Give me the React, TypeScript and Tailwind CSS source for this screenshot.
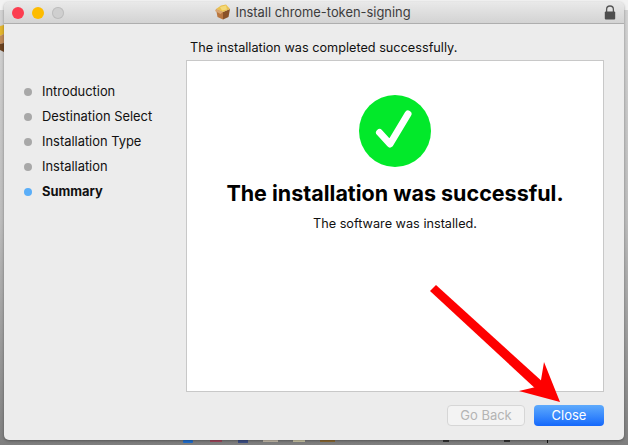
const sans = "font-['Inter','Liberation_Sans',sans-serif]";

function PackageIcon() {
  return (
    <svg width="16" height="16" viewBox="0 0 16 16" className="shrink-0">
      <path d="M1 5 L8 8 L8 15.5 L2.5 13 Z" fill="#b9763f" />
      <path d="M15 5 L8 8 L8 15.5 L13.5 13 Z" fill="#8a5228" />
      <path d="M1 5 L6 1.5 L11 .5 L15 5 L8 8 Z" fill="#e9c04f" />
      <path d="M5 3 L11 1.5 L12 5.5 L7 6.5 Z" fill="#f4d978" />
      <path d="M1 5 L8 8 L5.5 10 L0 7 Z" fill="#d9a671" />
    </svg>
  );
}

function LockIcon() {
  return (
    <svg width="12" height="15" viewBox="0 0 12 15" className="shrink-0">
      <path d="M2.6 7V4.4a3.4 3.4 0 0 1 6.8 0V7" fill="none" stroke="#555" strokeWidth="1.3" />
      <rect x="0.8" y="6.6" width="10.4" height="7.8" rx="1" fill="#4d4d4d" />
    </svg>
  );
}

function Step({ label, active }: { label: string; active?: boolean }) {
  return (
    <li className="flex h-[25px] items-center">
      <span className={`mr-[10px] h-2 w-2 rounded-full ${active ? "bg-[#5aaef8]" : "bg-[#a8a8a8]"}`} />
      <span className={`text-[12.9px] text-[#111] ${active ? "font-bold" : ""}`}>{label}</span>
    </li>
  );
}

function Desktop() {
  return (
    <svg className="pointer-events-none absolute inset-0" width="628" height="445" viewBox="0 0 628 445">
      <rect x="0" y="0" width="628" height="10" fill="#f2f2f2" />
      <path d="M0 26 L4 25 L4 34 L0 36 Z" fill="#e2b52e" />
      <path d="M0 36 L4 34 L4 43 L0 44 Z" fill="#c08a58" />
      <path d="M0 44 L4 43 L4 52 L0 50 Z" fill="#6b4220" />
      <rect x="183" y="440" width="10" height="3" rx="1" fill="#1f6fd0" />
      <rect x="210" y="440" width="12" height="2" fill="#a5485e" />
      <rect x="238" y="440" width="10" height="3" fill="#3d4f86" />
      <rect x="263" y="440" width="15" height="2" fill="#c9bfae" />
      <rect x="293" y="440" width="12" height="2" fill="#cfc9a8" />
      <rect x="320" y="440" width="15" height="2" fill="#8e6a32" />
      <rect x="443" y="440" width="6" height="2" fill="#333" />
      <rect x="504" y="440" width="6" height="2" fill="#333" />
      <rect x="547" y="440" width="1" height="3" fill="#111" />
    </svg>
  );
}

export default function App() {
  return (
    <div className={`relative h-[445px] w-[628px] overflow-hidden bg-gradient-to-b from-[#d4d4d4] via-[#bcbcbc] to-[#7f7f7f] pb-[5px] pl-1 pr-1 pt-[2px] ${sans}`}>
      <Desktop />
      <div className="relative flex h-full flex-col overflow-hidden rounded-[5px] bg-[#ececec] shadow-[0_1px_3px_rgba(0,0,0,0.35)]">
        <header className="flex h-[22px] shrink-0 items-center border-b border-[#aeaeae] bg-gradient-to-b from-[#e9e9e9] to-[#d3d3d3] pl-2 pr-2">
          <div className="flex w-[52px] gap-2">
            <span className="h-3 w-3 rounded-full bg-[#fc3d50]" />
            <span className="h-3 w-3 rounded-full bg-[#fdbc00]" />
            <span className="h-3 w-3 rounded-full bg-[#cfcfcf] ring-1 ring-inset ring-[#bdbdbd]" />
          </div>
          <div className="flex flex-1 items-center justify-center gap-[4px] pr-[42px] text-[12.9px] text-[#3c3c3c]">
            <PackageIcon />
            <span>Install chrome-token-signing</span>
          </div>
          <LockIcon />
        </header>

        <main className="flex min-h-0 flex-1 pr-5">
          <aside className="w-[182px] shrink-0 pl-5 pt-[55px]">
            <ol>
              <Step label="Introduction" />
              <Step label="Destination Select" />
              <Step label="Installation Type" />
              <Step label="Installation" />
              <Step label="Summary" active />
            </ol>
          </aside>

          <div className="flex min-w-0 flex-1 flex-col">
            <p className="flex h-[36px] shrink-0 items-center pl-1 pt-[12px] text-[12.7px] text-[#111]">
              The installation was completed successfully.
            </p>
            <section className="flex h-[332px] shrink-0 flex-col items-center border border-[#c8c8c8] bg-white pt-[34px]">
              <svg width="72" height="72" viewBox="0 0 72 72">
                <circle cx="36" cy="36" r="36" fill="#02e92a" />
                <path d="M20.5 37.5 L31 49 L49 19" fill="none" stroke="#fff" strokeWidth="7" strokeLinecap="round" strokeLinejoin="round" />
              </svg>
              <h1 className="mt-[12px] text-[21.5px] font-bold leading-[28px] text-black">The installation was successful.</h1>
              <p className="mt-[7px] text-[12.7px] text-[#111]">The software was installed.</p>
            </section>
            <footer className="flex justify-end gap-[9px] pt-[13px]">
              <button className="h-[21px] w-[78px] rounded-[4px] border border-[#d6d6d6] bg-[#f3f3f3] text-[13px] text-[#b4b4b4]">Go Back</button>
              <button className="h-[21px] w-[70px] rounded-[4px] bg-gradient-to-b from-[#5eaafc] to-[#1467fb] text-[13px] text-white">Close</button>
            </footer>
          </div>
        </main>
      </div>

      <svg className="pointer-events-none absolute inset-0" width="628" height="445" viewBox="0 0 628 445">
        <polygon points="430,291 436,285 545,384 538,391" fill="#fe0000" />
        <polygon points="544,362 560,402 519,391 540,386" fill="#fe0000" />
      </svg>
    </div>
  );
}
